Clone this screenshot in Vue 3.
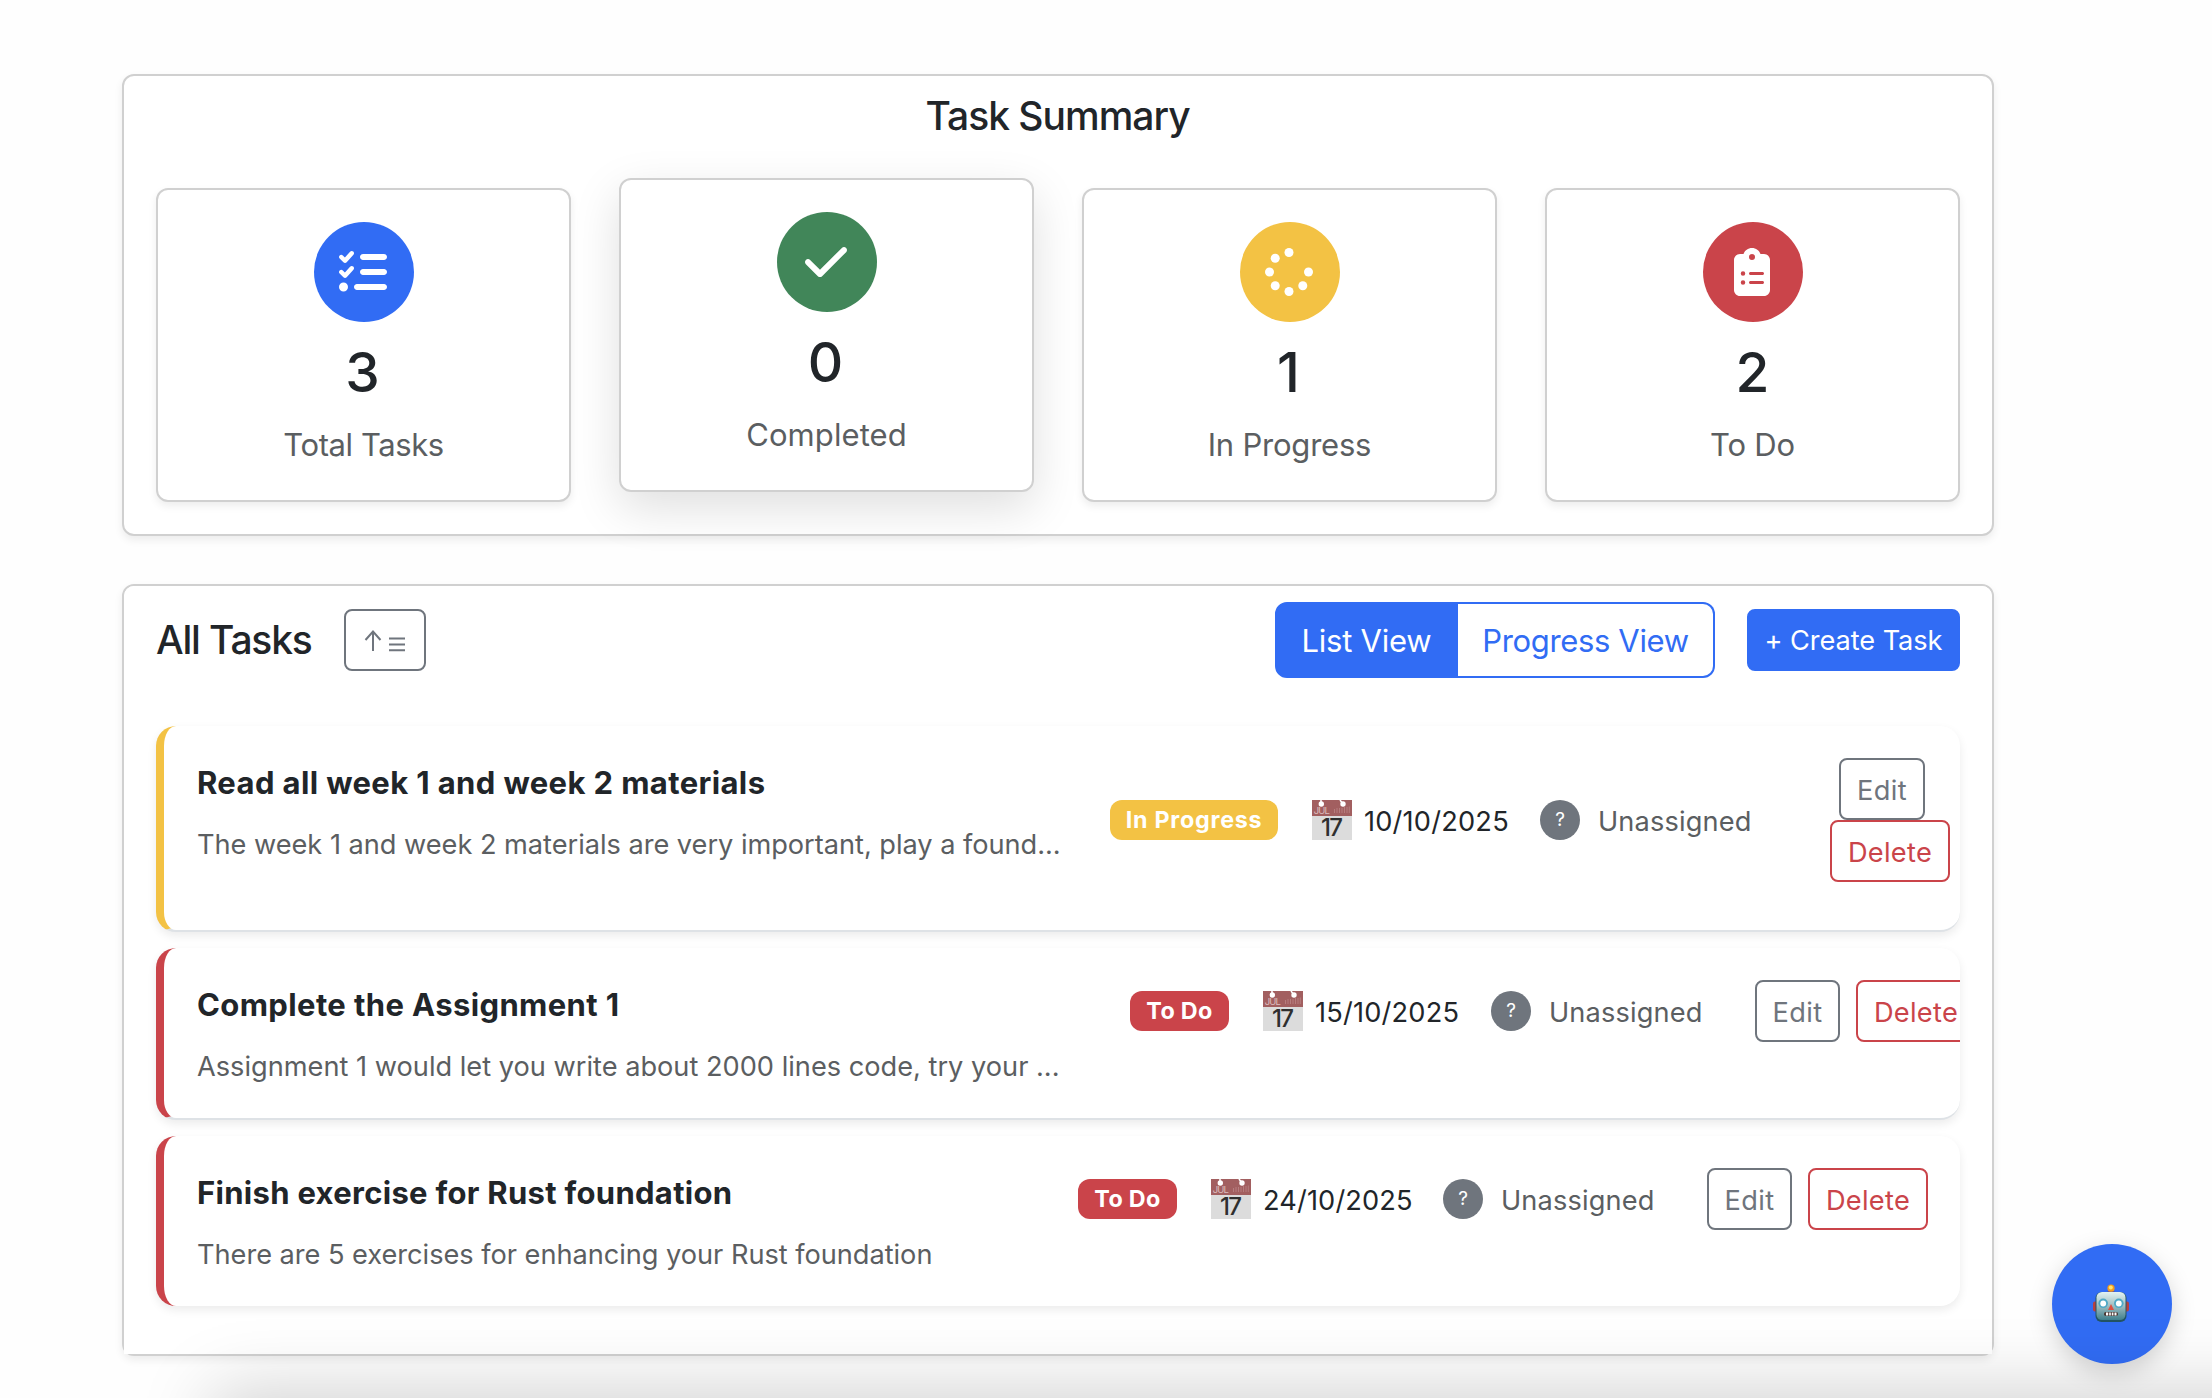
<script setup>
const stats = [
  { key: 'total', value: 3, label: 'Total Tasks' },
  { key: 'done', value: 0, label: 'Completed' },
  { key: 'progress', value: 1, label: 'In Progress' },
  { key: 'todo', value: 2, label: 'To Do' },
]

const tasks = [
  {
    id: 1,
    status: 'progress',
    statusLabel: 'In Progress',
    title: 'Read all week 1 and week 2 materials',
    text: 'The week 1 and week 2 materials are very important, play a found...',
    due: '10/10/2025',
  },
  {
    id: 2,
    status: 'todo',
    statusLabel: 'To Do',
    title: 'Complete the Assignment 1',
    text: 'Assignment 1 would let you write about 2000 lines code, try your ...',
    due: '15/10/2025',
  },
  {
    id: 3,
    status: 'todo',
    statusLabel: 'To Do',
    title: 'Finish exercise for Rust foundation',
    text: 'There are 5 exercises for enhancing your Rust foundation',
    due: '24/10/2025',
  },
]

const spinnerDots = [
  [256, 48], [108.9, 108.9], [48, 256], [108.9, 403.1],
  [256, 464], [403.1, 403.1], [464, 256],
]
</script>

<template>
  <div class="page">
    <main class="content">
      <section class="panel summary">
        <h2 class="summary-title">Task Summary</h2>
        <div class="stats">
          <article v-for="s in stats" :key="s.key" class="stat" :class="s.key">
            <div class="stat-icon">
              <svg v-if="s.key === 'total'" width="48" height="48" viewBox="0 0 512 512">
                <path fill="currentColor" d="M152.1 38.2c9.9 8.9 10.7 24 1.8 33.9l-72 80c-4.4 4.9-10.6 7.8-17.2 7.9s-12.9-2.4-17.6-7L7 113C-2.3 103.6-2.3 88.4 7 79s24.6-9.4 33.9 0l22.1 22.1 55.1-61.2c8.9-9.9 24-10.7 33.9-1.8zm0 160c9.9 8.9 10.7 24 1.8 33.9l-72 80c-4.4 4.9-10.6 7.8-17.2 7.9s-12.9-2.4-17.6-7L7 273c-9.4-9.4-9.4-24.6 0-33.9s24.6-9.4 33.9 0l22.1 22.1 55.1-61.2c8.9-9.9 24-10.7 33.9-1.8zM224 96c0-17.7 14.3-32 32-32l224 0c17.7 0 32 14.3 32 32s-14.3 32-32 32l-224 0c-17.7 0-32-14.3-32-32zm0 160c0-17.7 14.3-32 32-32l224 0c17.7 0 32 14.3 32 32s-14.3 32-32 32l-224 0c-17.7 0-32-14.3-32-32zM160 416c0-17.7 14.3-32 32-32l288 0c17.7 0 32 14.3 32 32s-14.3 32-32 32l-288 0c-17.7 0-32-14.3-32-32zM48 368a48 48 0 1 1 0 96 48 48 0 1 1 0-96z" />
              </svg>
              <svg v-else-if="s.key === 'done'" width="42" height="48" viewBox="0 0 448 512">
                <path fill="currentColor" d="M438.6 105.4c12.5 12.5 12.5 32.8 0 45.3l-256 256c-12.5 12.5-32.8 12.5-45.3 0l-128-128c-12.5-12.5-12.5-32.8 0-45.3s32.8-12.5 45.3 0L160 338.7 393.4 105.4c12.5-12.5 32.8-12.5 45.3 0z" />
              </svg>
              <svg v-else-if="s.key === 'progress'" width="48" height="48" viewBox="0 0 512 512">
                <circle v-for="(d, i) in spinnerDots" :key="i" :cx="d[0]" :cy="d[1]" r="48" fill="currentColor" />
              </svg>
              <svg v-else width="36" height="48" viewBox="0 0 384 512">
                <path fill="currentColor" d="M192 0c-41.8 0-77.4 26.7-90.5 64L64 64C28.7 64 0 92.7 0 128L0 448c0 35.3 28.7 64 64 64l256 0c35.3 0 64-28.7 64-64l0-320c0-35.3-28.7-64-64-64l-37.5 0C269.4 26.7 233.8 0 192 0zm0 64a32 32 0 1 1 0 64 32 32 0 1 1 0-64zM72 272a24 24 0 1 1 48 0 24 24 0 1 1 -48 0zm104-16l128 0c8.8 0 16 7.2 16 16s-7.2 16-16 16l-128 0c-8.8 0-16-7.2-16-16s7.2-16 16-16zM72 368a24 24 0 1 1 48 0 24 24 0 1 1 -48 0zm88 0c0-8.8 7.2-16 16-16l128 0c8.8 0 16 7.2 16 16s-7.2 16-16 16l-128 0c-8.8 0-16-7.2-16-16z" />
              </svg>
            </div>
            <div class="stat-value">{{ s.value }}</div>
            <div class="stat-label">{{ s.label }}</div>
          </article>
        </div>
      </section>

      <section class="panel tasks">
        <div class="tasks-body">
          <header class="toolbar">
            <h2 class="tasks-title">All Tasks</h2>
            <button class="btn btn-sort" aria-label="Sort">
              <svg width="42" height="24" viewBox="0 0 42 24" fill="none" stroke="currentColor" stroke-width="2">
                <path d="M9 22V3M1.500 11 9 2.600 16.500 11" />
                <path d="M25 9.500h16M25 15.500h16M25 21.300h16" />
              </svg>
            </button>
            <div class="views">
              <button class="view view-on">List View</button>
              <button class="view view-off">Progress View</button>
            </div>
            <button class="btn btn-create">+ Create Task</button>
          </header>

          <ul class="list">
            <li v-for="t in tasks" :key="t.id" class="task" :class="[t.status, 'task-' + t.id]">
              <div class="info">
                <h3 class="task-title">{{ t.title }}</h3>
                <p class="task-text">{{ t.text }}</p>
              </div>
              <div class="meta">
                <span class="badge">{{ t.statusLabel }}</span>
                <svg class="cal" width="40" height="40" viewBox="0 0 40 40">
                  <rect width="40" height="40" fill="#dcdcdc" />
                  <rect width="40" height="16" fill="#a25f60" />
                  <path d="M9 0v4M28 0l3 4" stroke="#fff" stroke-width="1.500" />
                  <circle cx="9.300" cy="4" r="2.700" fill="#fff" />
                  <circle cx="31" cy="4" r="2.700" fill="#fff" />
                  <path d="M22.500 13v-4M25 13v-5M27.500 13v-5M30 13V8M32.500 13V7M35 13V7M37.300 13V6.500" stroke="#b67d7e" stroke-width="1" />
                  <text x="1.800" y="13.800" class="cal-month" textLength="16">JUL</text>
                  <text x="20" y="35.500" text-anchor="middle" class="cal-day" textLength="22">17</text>
                </svg>
                <span class="due">{{ t.due }}</span>
                <span class="avatar">?</span>
                <span class="assignee">Unassigned</span>
                <div class="actions">
                  <button class="btn btn-edit">Edit</button>
                  <button class="btn btn-delete">Delete</button>
                </div>
              </div>
            </li>
          </ul>
        </div>
      </section>
    </main>

    <button class="fab" aria-label="Assistant">
      <svg width="36" height="40" viewBox="0 0 36 40">
        <defs>
          <linearGradient id="robotFace" x1="0" y1="0" x2="0" y2="1">
            <stop offset="0" stop-color="#e2f3f2" />
            <stop offset=".5" stop-color="#9dbcc0" />
            <stop offset="1" stop-color="#3f7f8c" />
          </linearGradient>
        </defs>
        <rect x="0" y="18.500" width="5" height="10" rx="2" fill="#b8403f" />
        <rect x="31" y="18.500" width="5" height="10" rx="2" fill="#b8403f" />
        <path d="M13.500 10c0-3 9-3 9 0z" fill="#6a5591" />
        <circle cx="18" cy="5.200" r="3.600" fill="#f39a1f" />
        <circle cx="17.800" cy="4.400" r="2" fill="#ffe46a" />
        <rect x="2.500" y="9" width="31" height="30" rx="6" fill="#235463" />
        <rect x="3.500" y="9" width="29" height="28" rx="5.500" fill="url(#robotFace)" />
        <circle cx="10.200" cy="20.300" r="4.800" fill="#4fa9c6" />
        <circle cx="25.800" cy="20.300" r="4.800" fill="#4fa9c6" />
        <circle cx="10.200" cy="20.500" r="2.900" fill="#fff" />
        <circle cx="25.800" cy="20.500" r="2.900" fill="#fff" />
        <path d="M18 21l3 6h-6z" fill="#dd4f42" />
        <rect x="11" y="29" width="14" height="4" rx="1.800" fill="#4a3a37" />
        <path d="M13 31h2.200M16.200 31h1.600M18.800 31h1.600M21.500 31h2" stroke="#fff" stroke-width="2.800" />
      </svg>
    </button>
    <div class="bottom-shade"></div>
  </div>
</template>

<style>
body {
  background: #fff;
}
</style>

<style scoped>
* {
  box-sizing: border-box;
}
.page {
  position: relative;
  width: 2212px;
  height: 1398px;
  overflow: hidden;
  background: #fefefe;
  color: #212529;
  font-family: Inter, "Liberation Sans", sans-serif;
}
.content {
  display: flex;
  flex-direction: column;
  gap: 48px;
  width: 1872px;
  margin-left: 122px;
  padding-top: 74px;
}
h2, h3, p, ul {
  margin: 0;
  padding: 0;
}
button {
  font-family: inherit;
  padding: 0;
  white-space: nowrap;
}
.panel {
  border: 2px solid #d0d0d0;
  border-radius: 12px;
  background: #fff;
  box-shadow: 0 4px 8px rgba(0, 0, 0, 0.075);
}
.summary {
  height: 462px;
  padding: 16px 32px 0;
}
.summary-title, .tasks-title {
  font-size: 39px;
  line-height: 48px;
  font-weight: 500;
  letter-spacing: -1px;
}
.summary-title {
  padding-right: 1px;
  text-align: center;
}
.tasks-title {
  width: 156px;
  letter-spacing: -1.18px;
  white-space: nowrap;
}
.stats {
  display: grid;
  grid-template-columns: repeat(4, 1fr);
  gap: 48px;
  margin-top: 48px;
}
.stat {
  display: flex;
  flex-direction: column;
  align-items: center;
  height: 314px;
  padding-top: 32px;
  border: 2px solid #d0d0d0;
  border-radius: 12px;
  background: #fff;
  box-shadow: 0 4px 8px rgba(0, 0, 0, 0.075);
}
.stat.done {
  transform: translateY(-10px);
  box-shadow: 0 16px 48px rgba(0, 0, 0, 0.13);
}
.stat-icon {
  display: flex;
  align-items: center;
  justify-content: center;
  width: 100px;
  height: 100px;
  padding-right: 2px;
  border-radius: 50%;
  color: #fff;
}
.total .stat-icon { background: #316cf4; }
.done .stat-icon { background: #418659; }
.progress .stat-icon { background: #f3c244; }
.todo .stat-icon { background: #ca444a; }
.stat-value {
  margin-top: 17px;
  padding-right: 2px;
  font-size: 55px;
  line-height: 66px;
  font-weight: 500;
}
.todo .stat-value {
  padding-right: 0;
}
.stat-label {
  margin-top: 16px;
  font-size: 31px;
  line-height: 48px;
  letter-spacing: -0.22px;
  color: #5b5e61;
}
.total .stat-label {
  letter-spacing: -0.42px;
}
.done .stat-label {
  letter-spacing: 0.08px;
}
.tasks {
  height: 772px;
}
.tasks-body {
  height: 768px;
  padding: 16px 32px 0;
  border-radius: 10px 10px 0 0;
  background: #fff;
}
.toolbar {
  display: flex;
  align-items: center;
  height: 76px;
}
.btn {
  height: 62px;
  border: 2px solid;
  border-radius: 8px;
  background: transparent;
  font-size: 27.2px;
}
.btn-sort {
  display: flex;
  align-items: center;
  justify-content: center;
  width: 82px;
  margin-left: 32px;
  padding-top: 2px;
  color: #6f757d;
}
.views {
  display: flex;
  margin-left: auto;
}
.view {
  height: 76px;
  border: 2px solid #316cf4;
  font-size: 31px;
}
.view-on {
  width: 183px;
  border-radius: 12px 0 0 12px;
  background: #316cf4;
  color: #fff;
  letter-spacing: -0.24px;
}
.view-off {
  width: 257px;
  border-left: 0;
  border-radius: 0 12px 12px 0;
  background: #fff;
  color: #316cf4;
  letter-spacing: -0.34px;
}
.btn-create {
  width: 213px;
  margin-left: 32px;
  padding-top: 1px;
  border-color: #316cf4;
  background: #316cf4;
  color: #fff;
  letter-spacing: -0.08px;
}
.list {
  display: flex;
  flex-direction: column;
  gap: 16px;
  margin-top: 48px;
  list-style: none;
}
.task {
  display: flex;
  align-items: flex-start;
  height: 172px;
  padding: 32px 0 0 33px;
  border-left: 8px solid #ca444a;
  border-bottom: 2px solid #dee2e6;
  border-radius: 20px;
  overflow: hidden;
  background: #fff;
  box-shadow: 0 4px 10px rgba(0, 0, 0, 0.08);
}
.task.progress {
  height: 206px;
  border-left-color: #f3c244;
}
.task-3 {
  height: 170px;
  border-bottom: 0;
}
.info {
  flex: none;
  padding-top: 1px;
}
.task-1 .info { width: 913px; }
.task-2 .info { width: 933px; }
.task-3 .info { width: 881px; }
.task-title {
  font-size: 31px;
  line-height: 48px;
  font-weight: 700;
  letter-spacing: 0.38px;
  white-space: nowrap;
}
.task-3 .task-title {
  letter-spacing: 0.3px;
}
.task-text {
  margin-top: 17px;
  font-size: 27.2px;
  line-height: 42px;
  letter-spacing: -0.03px;
  color: #5b5e61;
  white-space: nowrap;
}
.task-2 .task-text {
  letter-spacing: 0;
}
.meta {
  display: flex;
  flex: none;
  align-items: center;
}
.badge {
  width: 99px;
  height: 40px;
  border-radius: 12px;
  background: #ca444a;
  color: #fff;
  font-size: 23.3px;
  line-height: 40px;
  font-weight: 700;
  letter-spacing: 0.33px;
  text-align: center;
}
.progress .badge {
  width: 168px;
  background: #f3c244;
  letter-spacing: 0.75px;
}
.cal {
  flex: none;
  margin-left: 34px;
}
.cal-month {
  font-size: 9.5px;
  fill: #dcbcbd;
}
.cal-day {
  font-size: 24px;
  font-weight: 500;
  fill: #2f2f2f;
}
.due {
  width: 144px;
  margin-left: 12px;
  padding-top: 3px;
  font-size: 27.2px;
  line-height: 40px;
  letter-spacing: 0.2px;
}
.task-3 .due {
  width: 148px;
  letter-spacing: 0.13px;
}
.avatar {
  width: 40px;
  height: 40px;
  margin-left: 32px;
  border-radius: 50%;
  background: #6f757d;
  color: #fff;
  font-size: 19px;
  line-height: 40px;
  text-align: center;
}
.assignee {
  width: 206px;
  padding-top: 3px;
  margin-left: 18px;
  font-size: 27.2px;
  line-height: 40px;
  letter-spacing: 0.14px;
  color: #5b5e61;
}
.actions {
  display: flex;
  gap: 16px;
}
.task-1 .actions {
  flex-direction: column;
  gap: 0;
  margin-left: 26px;
}
.btn-edit {
  width: 85px;
  color: #6f757d;
  letter-spacing: 0.4px;
}
.task-1 .btn-edit {
  width: 86px;
  margin-left: 9px;
}
.btn-delete {
  width: 120px;
  color: #ca444a;
  letter-spacing: 0.3px;
}
.btn-edit, .btn-delete {
  padding-top: 2px;
}
.fab {
  position: absolute;
  left: 2052px;
  top: 1244px;
  display: flex;
  align-items: center;
  justify-content: center;
  width: 120px;
  height: 120px;
  padding: 0 2px 2px 0;
  border: 0;
  border-radius: 50%;
  background: #316cf4;
  box-shadow: 0 8px 24px rgba(0, 0, 0, 0.17);
}
.bottom-shade {
  position: absolute;
  left: 212px;
  top: 1398px;
  width: 2300px;
  height: 300px;
  box-shadow: 0 -8px 68px rgba(0, 0, 0, 0.175);
  pointer-events: none;
}
</style>
